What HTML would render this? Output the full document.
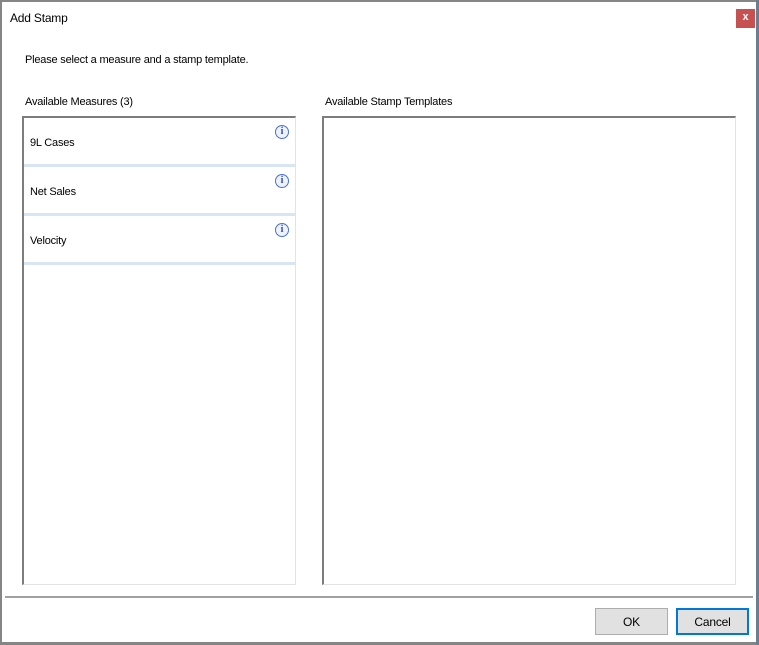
<!DOCTYPE html>
<html><head><style>
*{margin:0;padding:0;box-sizing:border-box}
body{width:759px;height:645px;background:#fff;font-family:"Liberation Sans",sans-serif;font-size:11px;letter-spacing:-0.2px;color:#000;position:relative;overflow:hidden}
.a{position:absolute}
.box{position:absolute;border-top:2px solid #7d7d7d;border-left:2px solid #7d7d7d;border-right:1px solid #e3e3e3;border-bottom:1px solid #e3e3e3;background:#fff}
.item{position:absolute;left:0;width:271px;height:49px;border-bottom:3px solid #d9e5f2}
.item span{position:absolute;left:6px;top:19px}
.info{position:absolute;left:251px;top:7px;width:14px;height:14px;border-radius:50%;border:1.5px solid #4a6fd6;background:#eef2fc;color:#2b4ec0;font:bold 10px "Liberation Serif",serif;text-align:center;line-height:11px;letter-spacing:0}
.btn{position:absolute;top:608px;width:73px;height:27px;background:#e1e1e1;border:1px solid #adadad;text-align:center;line-height:26px;font-size:12px}
</style></head><body>
<div class="a" style="left:0;top:0;width:759px;height:2px;background:#858585"></div>
<div class="a" style="left:0;top:0;width:2px;height:645px;background:#858585"></div>
<div class="a" style="left:0;top:642px;width:759px;height:3px;background:#858585"></div>
<div class="a" style="left:756px;top:0;width:3px;height:645px;background:#6b7d8f"></div>
<div class="a" style="left:10px;top:11px;font-size:12px">Add Stamp</div>
<div class="a" style="left:736px;top:9px;width:19px;height:19px;background:#c75050;color:#fff;font-weight:bold;font-size:11px;text-align:center;line-height:17px">x</div>
<div class="a" style="left:25px;top:54px">Please select a measure and a stamp template.</div>
<div class="a" style="left:25px;top:96px">Available Measures (3)</div>
<div class="a" style="left:325px;top:96px">Available Stamp Templates</div>
<div class="box" style="left:22px;top:116px;width:274px;height:469px">
 <div class="item" style="top:0"><span>9L Cases</span><div class="info">i</div></div>
 <div class="item" style="top:49px"><span>Net Sales</span><div class="info">i</div></div>
 <div class="item" style="top:98px"><span>Velocity</span><div class="info">i</div></div>
</div>
<div class="box" style="left:322px;top:116px;width:414px;height:469px"></div>
<div class="a" style="left:5px;top:596px;width:748px;height:2px;background:#a0a0a0"></div>
<div class="btn" style="left:595px">OK</div>
<div class="btn" style="left:676px;border:2px solid #0078d7;line-height:24px">Cancel</div>
</body></html>
